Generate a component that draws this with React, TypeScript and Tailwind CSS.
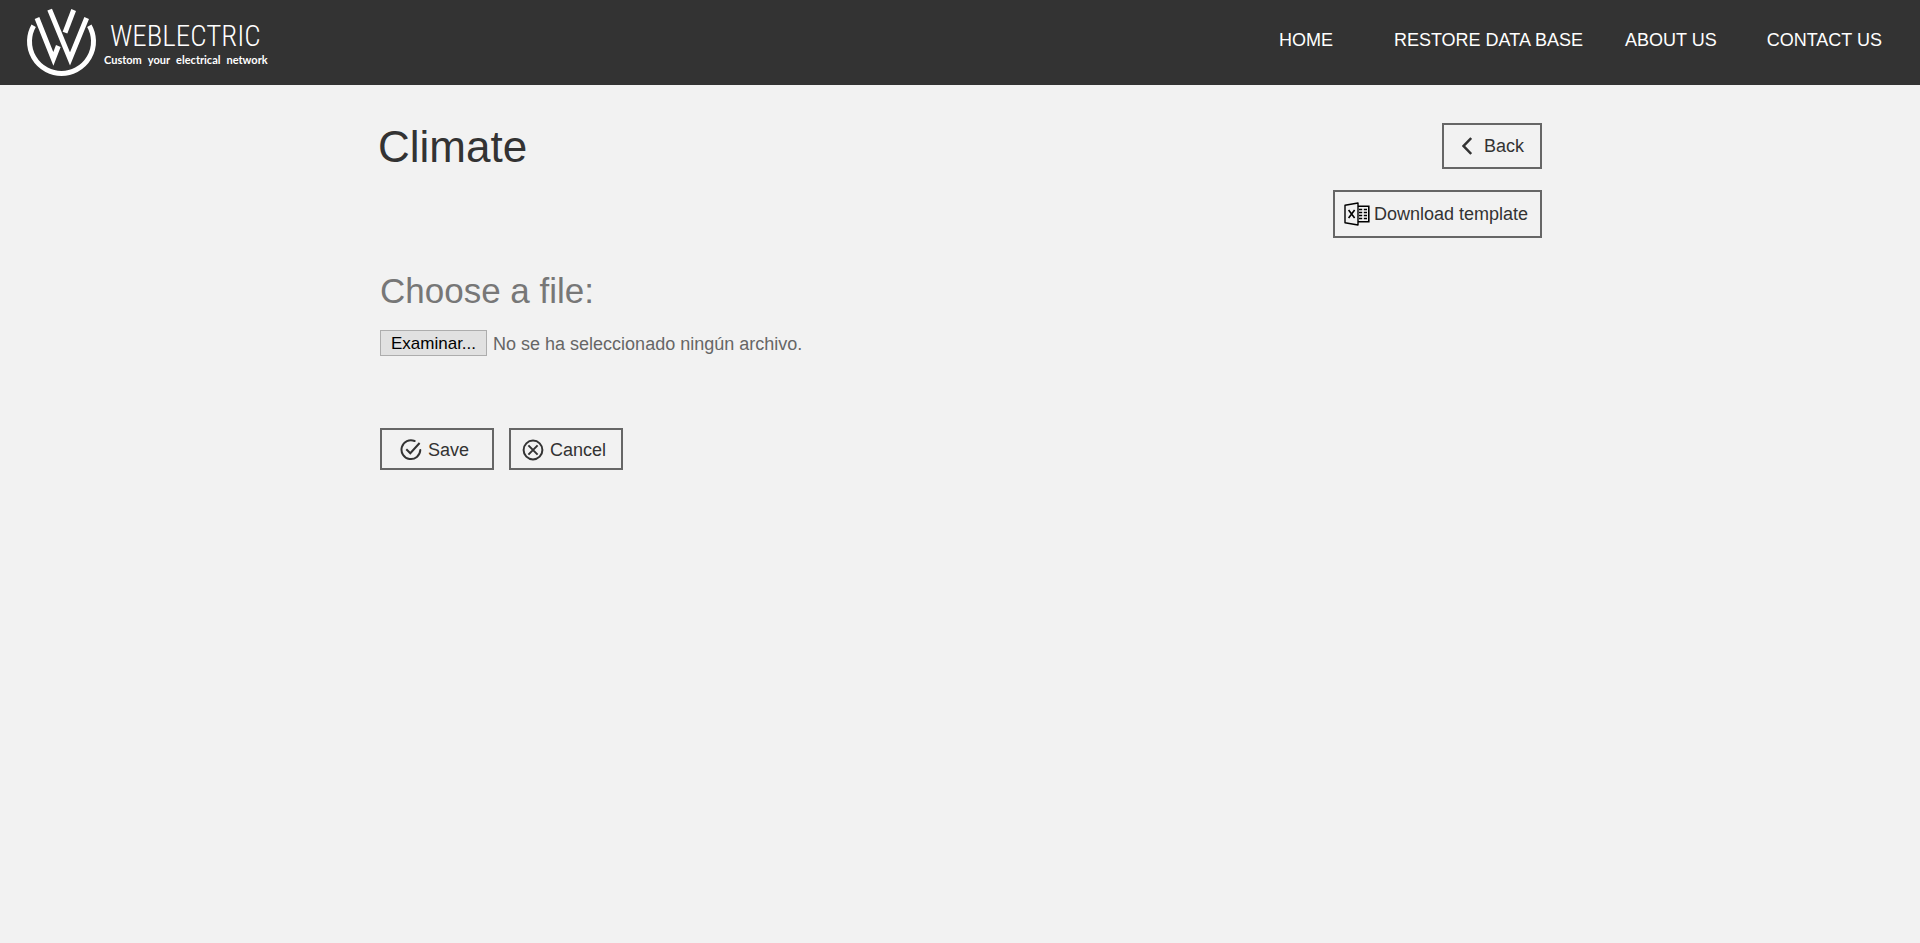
import React from "react";

function LogoMark() {
  return (
    <svg viewBox="45 20 219 216" className="h-18 w-[73px] shrink-0" fill="none" stroke="#fff" strokeWidth="15" aria-hidden="true">
      <path d="M71 76A96 96 0 1 0 238 76" />
      <path d="M81 53L130 176L145 137" />
      <path d="M119 28L180 176L230 53" />
      <path d="M191 29L165 97" />
    </svg>
  );
}

function ExcelIcon() {
  return (
    <svg viewBox="0 0 26 24" className="h-6 w-[26px] shrink-0" fill="none" stroke="#000" strokeWidth="1.4" aria-hidden="true">
      <path d="M1 3.2L14 1v22L1 20.8z" strokeLinejoin="round" />
      <path d="M14 4.2h10.8v15.6H14" strokeWidth="1.6" />
      <path d="M4.6 8l6 8M10.6 8l-6 8" strokeWidth="1.6" />
      <path d="M15 7.5h3.2M15 10.5h3.2M15 13.5h3.2M15 16.5h3.2M19.8 7.5h3.2M19.8 10.5h3.2M19.8 13.5h3.2M19.8 16.5h3.2" strokeWidth="1.5" />
    </svg>
  );
}

function SaveIcon() {
  return (
    <svg viewBox="0 0 22 22" className="size-[22px] shrink-0" fill="none" stroke="#333" strokeWidth="2" aria-hidden="true">
      <path d="M14.6 2A9.4 9.4 0 1 0 20.3 11" strokeLinecap="round" />
      <path d="M6.3 10.2l4 4L19.6 4" />
    </svg>
  );
}

function CancelIcon() {
  return (
    <svg viewBox="0 0 22 22" className="size-[22px] shrink-0" fill="none" stroke="#333" strokeWidth="2" aria-hidden="true">
      <circle cx="11" cy="11" r="9.4" />
      <path d="M6.4 6.4l9.2 9.2M15.6 6.4l-9.2 9.2" />
    </svg>
  );
}

function BackIcon() {
  return (
    <svg viewBox="0 0 10 18" className="h-[18px] w-[10px] shrink-0" fill="none" stroke="#333" strokeWidth="2.5" aria-hidden="true">
      <path d="M9.2 1L1.6 9L9.2 17" />
    </svg>
  );
}

export default function App() {
  return (
    <div className="min-h-screen bg-[#f2f2f2] font-['Liberation_Sans',Arial,sans-serif] text-lg leading-6 text-[#333]">
      <header className="flex h-[85px] items-center justify-between bg-[#333] pr-[38px] pl-[25px] text-white">
        <a href="#" className="flex items-center gap-1.5">
          <LogoMark />
          <span className="flex flex-col">
            <span className="pl-1.5 font-['Roboto_Condensed','Liberation_Serif',serif] text-[29px] leading-[34px] font-light">WEBLECTRIC</span>
            <span className="flex gap-1.5 font-['Lato',sans-serif] text-[11px] leading-[14px] font-bold">
              <span>Custom</span>
              <span>your</span>
              <span>electrical</span>
              <span>network</span>
            </span>
          </span>
        </a>
        <nav className="flex pb-1.5">
          <a href="#" className="mr-[61px]">HOME</a>
          <a href="#" className="mr-[42px]">RESTORE DATA BASE</a>
          <a href="#" className="mr-[50px]">ABOUT US</a>
          <a href="#">CONTACT US</a>
        </nav>
      </header>

      <main className="mx-auto max-w-[1164px] pt-[38px]">
        <div className="flex items-start justify-between">
          <h1 className="text-[44px] leading-12">Climate</h1>
          <div className="flex flex-col items-end gap-[21px]">
            <button type="button" className="flex h-[46px] w-[100px] items-center gap-3 border-2 border-[#666] pl-[18px]">
              <BackIcon />
              Back
            </button>
            <button type="button" className="flex h-12 w-[209px] items-center gap-1 border-2 border-[#666] pl-[9px]">
              <ExcelIcon />
              Download template
            </button>
          </div>
        </div>

        <form className="mt-[33px] pl-0.5" onSubmit={(e) => e.preventDefault()}>
          <h2 className="text-[35px] leading-10 text-[#777]">Choose a file:</h2>
          <div className="mt-[19px] flex items-center gap-1.5 text-[#666]">
            <label className="flex h-[26px] items-center border border-[#adadad] bg-[#e1e1e1] px-2.5 pt-0.5 text-[17px] text-black">
              Examinar...
              <input type="file" className="sr-only" />
            </label>
            <span className="pt-0.5">No se ha seleccionado ningún archivo.</span>
          </div>
          <div className="mt-18 flex gap-[15px]">
            <button type="submit" className="flex h-[42px] w-[114px] items-center gap-1.5 border-2 border-[#666] pt-0.5 pl-[18px]">
              <SaveIcon />
              Save
            </button>
            <button type="button" className="flex h-[42px] w-[114px] items-center gap-1.5 border-2 border-[#666] pt-0.5 pl-[11px]">
              <CancelIcon />
              Cancel
            </button>
          </div>
        </form>
      </main>
    </div>
  );
}
